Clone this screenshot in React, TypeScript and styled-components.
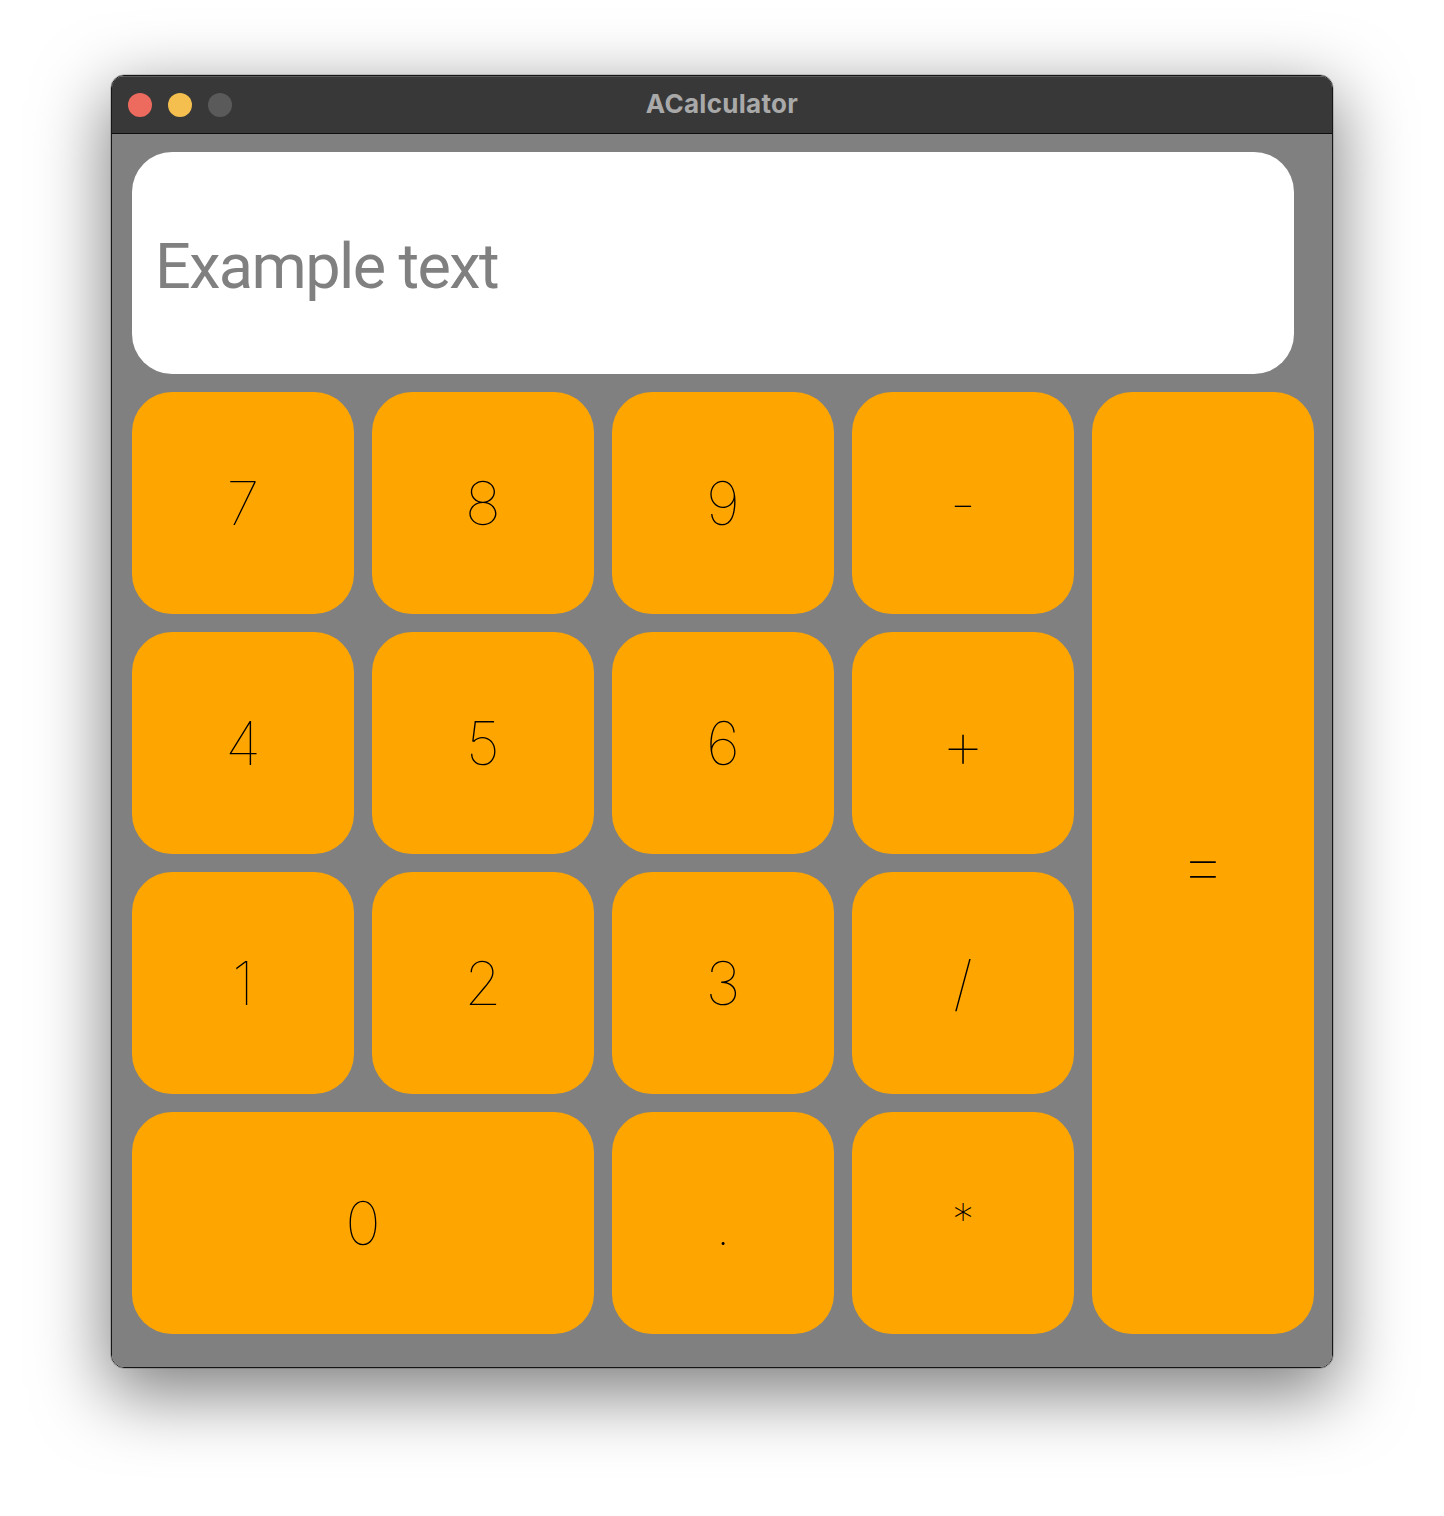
import React from "react";
import styled, { createGlobalStyle } from "styled-components";

const GlobalStyle = createGlobalStyle`
  html, body {
    margin: 0;
    padding: 0;
    background: #ffffff;
  }
  body {
    font-family: Inter, "Liberation Sans", sans-serif;
  }
`;

const Page = styled.div`
  display: flex;
  justify-content: center;
  padding-top: 75px;
  min-height: 1516px;
  box-sizing: border-box;
`;

const Window = styled.div`
  width: 1222px;
  box-sizing: border-box;
  border: 1px solid #161616;
  border-radius: 13px;
  overflow: hidden;
  display: flex;
  flex-direction: column;
  box-shadow: 0 22px 70px 4px rgba(0, 0, 0, 0.5), 0 0 0 0.5px rgba(0, 0, 0, 0.3);
  align-self: flex-start;
`;

const TitleBar = styled.div`
  position: relative;
  height: 57px;
  background: #383838;
  border-bottom: 1px solid #0e0e0e;
  display: flex;
  align-items: center;
  justify-content: center;
  box-shadow: inset 0 1px 0 rgba(255, 255, 255, 0.18);
`;

const Lights = styled.div`
  position: absolute;
  left: 16px;
  top: 0;
  bottom: 0;
  display: flex;
  align-items: center;
  gap: 16px;
`;

const Light = styled.span<{ $color: string }>`
  width: 24px;
  height: 24px;
  border-radius: 50%;
  background: ${(p) => p.$color};
`;

const Title = styled.div`
  font-family: Inter, "Liberation Sans", sans-serif;
  font-weight: 700;
  font-size: 26px;
  color: #a9a9a9;
  letter-spacing: 0.3px;
  margin-top: -3px;
`;

const Content = styled.div`
  background: #808080;
  padding: 18px 18px 33px 20px;
  display: flex;
  flex-direction: column;
  gap: 18px;
`;

const Display = styled.div`
  width: 1162px;
  height: 222px;
  box-sizing: border-box;
  background: #ffffff;
  border-radius: 40px;
  display: flex;
  align-items: center;
  padding-left: 23px;
  padding-top: 6px;
  font-family: Roboto, "Liberation Sans", sans-serif;
  font-size: 63px;
  font-weight: 400;
  color: #808080;
  letter-spacing: -1.6px;
`;

const Keypad = styled.div`
  display: grid;
  grid-template-columns: repeat(5, 222px);
  grid-template-rows: repeat(4, 222px);
  gap: 18px;
`;

const Key = styled.div<{ $col?: string; $row?: string; $size?: number; $lift?: number }>`
  background: #ffa500;
  border-radius: 40px;
  display: flex;
  align-items: center;
  justify-content: center;
  font-family: Inter, "Liberation Sans", sans-serif;
  font-weight: 100;
  font-size: ${(p) => p.$size ?? 60}px;
  color: #000000;
  grid-column: ${(p) => p.$col ?? "auto"};
  grid-row: ${(p) => p.$row ?? "auto"};
  padding-bottom: ${(p) => p.$lift ?? 0}px;
  user-select: none;
`;

const keys: { label: string; col?: string; row?: string; size?: number; lift?: number }[] = [
  { label: "7" },
  { label: "8" },
  { label: "9" },
  { label: "-" },
  { label: "=", col: "5", row: "1 / span 4", size: 76 },
  { label: "4" },
  { label: "5" },
  { label: "6" },
  { label: "+", size: 70 },
  { label: "1" },
  { label: "2" },
  { label: "3" },
  { label: "/" },
  { label: "0", col: "1 / span 2" },
  { label: "." },
  { label: "*", size: 44, lift: 8 },
];

export default function App() {
  return (
    <>
      <GlobalStyle />
      <Page>
        <Window>
          <TitleBar>
            <Lights>
              <Light $color="#ed6a5e" />
              <Light $color="#f4bf4f" />
              <Light $color="#5a5a5a" />
            </Lights>
            <Title>ACalculator</Title>
          </TitleBar>
          <Content>
            <Display>Example text</Display>
            <Keypad>
              {keys.map((k) => (
                <Key key={k.label} $col={k.col} $row={k.row} $size={k.size} $lift={k.lift}>
                  {k.label}
                </Key>
              ))}
            </Keypad>
          </Content>
        </Window>
      </Page>
    </>
  );
}
